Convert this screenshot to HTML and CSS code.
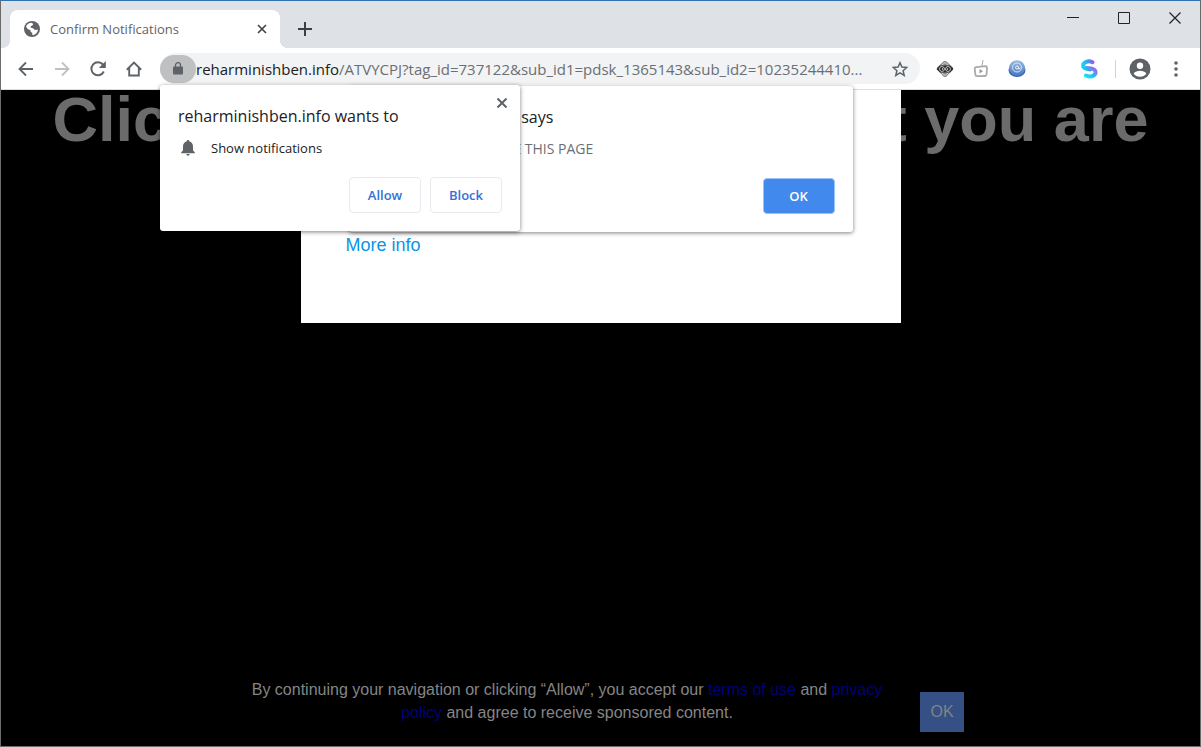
FILE: index.html
```html
<!DOCTYPE html>
<html lang="en">

<head>
    <meta charset="UTF-8">
    <meta name="viewport" content="width=device-width, initial-scale=1.0">
    <title>Confirm Notifications</title>
    <link rel="stylesheet" href="styles.css">
</head>

<body>
    <div class="window">
        <!-- Tab strip -->
        <header class="tabstrip">
            <div class="tab">
                <svg class="favicon" width="16" height="16" viewBox="0 0 16 16">
                    <circle cx="8" cy="8" r="8" fill="#5f6368"/>
                    <path d="M2 5.500C3 3.200 5 2 7.600 1.800L9.300 3 8.300 4.600 6.700 5.200 6.800 6.800 9.200 7.200 10.200 8.600 12 9 13.900 8.400C13.800 11.400 11.400 14 8.200 14L8.400 12 6.600 10.800 6.400 9 3.800 8.200Z" fill="#fff"/>
                    <path d="M1.800 8.200L5.600 9.600 6.200 11.400 7.400 12.400 7.200 14C4 13.600 1.800 11 1.800 8.200Z" fill="#5f6368"/>
                </svg>
                <span class="tab-title">Confirm Notifications</span>
                <button class="icon-button tab-close" aria-label="Close tab">
                    <svg width="10" height="10" viewBox="0 0 10 10"><path d="M1 1l8 8M9 1L1 9" stroke="#3c4043" stroke-width="1.600"/></svg>
                </button>
            </div>
            <button class="icon-button new-tab" aria-label="New tab">
                <svg width="14" height="14" viewBox="0 0 14 14"><path d="M7 0v14M0 7h14" stroke="#3c4043" stroke-width="2"/></svg>
            </button>
            <div class="window-controls">
                <button class="icon-button" aria-label="Minimize">
                    <svg width="12" height="12" viewBox="0 0 12 12"><path d="M0 5.500h12" stroke="#222"/></svg>
                </button>
                <button class="icon-button" aria-label="Maximize">
                    <svg width="12" height="12" viewBox="0 0 12 12"><path d="M.5.5h11v11H.5z" fill="none" stroke="#222"/></svg>
                </button>
                <button class="icon-button" aria-label="Close">
                    <svg width="12" height="12" viewBox="0 0 12 12"><path d="M.5.5l11 11M11.500.5l-11 11" stroke="#222" stroke-width="1.200"/></svg>
                </button>
            </div>
        </header>

        <!-- Toolbar -->
        <nav class="toolbar">
            <button class="icon-button" aria-label="Back">
                <svg width="16" height="16" viewBox="0 0 16 16"><path d="M15 8H2M8 1.500L1.500 8 8 14.500" fill="none" stroke="#5f6368" stroke-width="1.800"/></svg>
            </button>
            <button class="icon-button" aria-label="Forward">
                <svg width="16" height="16" viewBox="0 0 16 16"><path d="M1 8h13M8 1.500L14.500 8 8 14.500" fill="none" stroke="#bdc1c6" stroke-width="1.800"/></svg>
            </button>
            <button class="icon-button" aria-label="Reload">
                <svg width="16" height="16" viewBox="0 0 16 16"><path d="M13.800 10.500A6.500 6.500 0 1 1 13 3.700" fill="none" stroke="#5f6368" stroke-width="2"/><path d="M15.800 0v7H8.800z" fill="#5f6368"/></svg>
            </button>
            <button class="icon-button" aria-label="Home">
                <svg width="16" height="16" viewBox="0 0 16 16"><path d="M.8 8.700L8 1.600l7.200 7.100M3.200 7v7.500h9.600V7" fill="none" stroke="#5f6368" stroke-width="1.900"/></svg>
            </button>

            <div class="omnibox">
                <button class="icon-button site-info" aria-label="View site information">
                    <svg width="10" height="13" viewBox="0 0 10 13"><path d="M2.500 5V3.200a2.500 2.500 0 0 1 5 0V5" fill="none" stroke="#5f6368" stroke-width="1.300"/><rect y="4.500" width="10" height="8" rx="1" fill="#5f6368"/></svg>
                </button>
                <span class="url"><span class="host">reharminishben.info</span>/ATVYCPJ?tag_id=737122&amp;sub_id1=pdsk_1365143&amp;sub_id2=10235244410...</span>
                <button class="icon-button star" aria-label="Bookmark this page">
                    <svg width="16" height="16" viewBox="0 0 16 16"><path d="M8 1.700l1.900 4.400 4.800.4-3.600 3.200 1.100 4.700L8 11.900l-4.200 2.500 1.100-4.700L1.300 6.500l4.800-.4z" fill="none" stroke="#5f6368" stroke-width="1.500"/></svg>
                </button>

                <!-- Permission prompt -->
                <section class="bubble permission">
                    <button class="icon-button bubble-close" aria-label="Dismiss">
                        <svg width="10" height="10" viewBox="0 0 10 10"><path d="M.5.5l9 9M9.500.5l-9 9" stroke="#5f6368" stroke-width="2"/></svg>
                    </button>
                    <h2 class="bubble-title">reharminishben.info wants to</h2>
                    <div class="permission-row">
                        <svg width="14" height="16" viewBox="0 0 14 16"><path d="M7 0c.8 0 1.200.5 1.200 1.300C10.700 1.900 12 4 12 6.500v4l1.800 1.800v.9H.2v-.9L2 10.500v-4C2 4 3.300 1.900 5.800 1.300 5.800.5 6.200 0 7 0zM5.400 14h3.200c0 1-.7 1.700-1.600 1.700S5.400 15 5.400 14z" fill="#5f6368"/></svg>
                        <span>Show notifications</span>
                    </div>
                    <div class="bubble-actions">
                        <button class="button">Allow</button>
                        <button class="button">Block</button>
                    </div>
                </section>
            </div>

            <div class="extensions">
                <button class="icon-button" aria-label="Extension">
                    <svg width="18" height="18" viewBox="0 0 18 18">
                        <path d="M8 1h2l7 6.500v2L10 17H8L1 9.500v-2z" fill="#8c8c8c"/>
                        <path d="M5.500 5.500L9 2.500l3.500 3M5.500 12.500L9 15.500l3.500-3" fill="none" stroke="#d5d5d5"/>
                        <path d="M4 5.500h10L17.500 9 14 12.500H4L.5 9z" fill="#2b2b2b"/>
                        <circle cx="6" cy="9" r="2.400" fill="#111" stroke="#ccc"/>
                        <circle cx="12" cy="9" r="2.400" fill="#111" stroke="#ccc"/>
                        <circle cx="6.500" cy="9" r=".8" fill="#fff"/><circle cx="11.500" cy="9" r=".8" fill="#fff"/>
                    </svg>
                </button>
                <button class="icon-button" aria-label="Extension">
                    <svg width="16" height="18" viewBox="0 0 16 18"><path d="M10 0L9 6" stroke="#aaa"/><path d="M3 7.200l9.500-1q1.500 0 1.500 1.500l-.5 7q-.2 1.300-1.500 1.300L4 16.200q-1.500 0-1.600-1.300L1.700 8.600Q1.700 7.400 3 7.200z" fill="none" stroke="#aaa" stroke-width="1.800"/><path d="M6.500 9v4.500l3.500-2.300z" fill="#999"/></svg>
                </button>
                <button class="icon-button" aria-label="Extension">
                    <svg width="18" height="18" viewBox="0 0 18 18">
                        <defs><linearGradient id="disc" x1="0" y1="0" x2="0" y2="1"><stop offset="0" stop-color="#9dbbe4"/><stop offset="1" stop-color="#4577bf"/></linearGradient></defs>
                        <ellipse cx="9" cy="10" rx="8.500" ry="7" fill="#305fa8"/>
                        <circle cx="9" cy="8.200" r="8" fill="url(#disc)"/>
                        <circle cx="9" cy="7.500" r="4.500" fill="none" stroke="#dbe7f7"/>
                        <path d="M10.500 7.500a1.500 1.500 0 1 1-1.500-1.500q1.500 0 1.500 1.500v1.300q1.500.5 1.800-1.300" fill="none" stroke="#eef4fc"/>
                    </svg>
                </button>
                <span class="extension-space"></span>
                <button class="icon-button" aria-label="Extension">
                    <svg width="18" height="20" viewBox="0 0 18 20">
                        <defs>
                            <linearGradient id="ribbon-top" x1="0" y1="0" x2="1" y2="0"><stop offset="0" stop-color="#1fd0ee"/><stop offset=".5" stop-color="#2fa4ee"/><stop offset="1" stop-color="#9a5cf0"/></linearGradient>
                            <linearGradient id="ribbon-bottom" x1="0" y1="1" x2="1" y2="0"><stop offset="0" stop-color="#18e8e4"/><stop offset=".5" stop-color="#22b8ee"/><stop offset="1" stop-color="#b955f0"/></linearGradient>
                        </defs>
                        <path d="M12.500 3.200C10 2 7 2.200 5 3.500 2.500 5 2.500 8 5 9.200c1.500.8 3.500.8 5 1.200" fill="none" stroke="url(#ribbon-top)" stroke-width="4" stroke-linecap="round"/>
                        <path d="M7 9c3 .3 6.500 0 8 2.500 1.500 3-.5 5-3 5.700-2 .5-4 .3-6-.7" fill="none" stroke="url(#ribbon-bottom)" stroke-width="4" stroke-linecap="round"/>
                        <path d="M8 6.500c3-.3 6 0 8.500 1.500M1.500 12.500c3 1 6 1.300 9 .8" fill="none" stroke="#fff" stroke-width=".8"/>
                    </svg>
                </button>
            </div>
            <span class="separator"></span>
            <button class="icon-button" aria-label="Profile">
                <svg width="22" height="22" viewBox="0 0 22 22"><circle cx="11" cy="11" r="10.500" fill="#5f6368"/><circle cx="11" cy="7.700" r="3.200" fill="#fff"/><path d="M4.600 15.500C6 13.500 8.500 12.700 11 12.700s5 .8 6.400 2.800A7.800 7.800 0 0 1 11 18.700a7.800 7.800 0 0 1-6.400-3.200z" fill="#fff"/></svg>
            </button>
            <button class="icon-button" aria-label="Menu">
                <svg width="4" height="16" viewBox="0 0 4 16" fill="#5f6368"><circle cx="2" cy="2" r="1.800"/><circle cx="2" cy="8" r="1.800"/><circle cx="2" cy="14" r="1.800"/></svg>
            </button>
        </nav>

        <!-- Page content -->
        <main class="page">
            <h1 class="headline">Click "Allow" to confirm that you are</h1>

            <div class="card">
                <a class="more-info" href="#">More info</a>
            </div>

            <section class="bubble alert">
                <h2 class="bubble-title">reharminishben.info says</h2>
                <p class="alert-text">CLICK ALLOW TO CLOSE THIS PAGE</p>
                <div class="bubble-actions">
                    <button class="button primary">OK</button>
                </div>
            </section>

            <footer class="consent">
                <p class="consent-text">By continuing your navigation or clicking “Allow”, you accept our <a href="#">terms of use</a> and <a href="#">privacy policy</a> and agree to receive sponsored content.</p>
                <button class="consent-ok">OK</button>
            </footer>
        </main>
    </div>
</body>

</html>
```

FILE: styles.css
```css
* {
    box-sizing: border-box;
}

body {
    margin: 0;
    font-family: "Open Sans", "Noto Sans", sans-serif;
    color: #202124;
}

h1,
h2,
p {
    margin: 0;
    font-weight: normal;
}

button {
    font-family: inherit;
    cursor: pointer;
}

.window {
    display: flex;
    flex-direction: column;
    min-height: 100vh;
    border: 1px solid #6b6b6b;
    border-top-color: #2f74b0;
}

.icon-button {
    display: flex;
    align-items: center;
    justify-content: center;
    flex: none;
    width: 36px;
    height: 28px;
    padding: 0;
    border: none;
    background: none;
}

/* Tab strip */
.tabstrip {
    display: flex;
    align-items: flex-end;
    height: 47px;
    padding-left: 9px;
    background-color: #dee1e6;
}

.tab {
    position: relative;
    display: flex;
    align-items: center;
    width: 270px;
    height: 38px;
    padding: 0 4px 0 14px;
    border-radius: 8px 8px 0 0;
    background-color: #fff;
}

.tab::before,
.tab::after {
    content: "";
    position: absolute;
    bottom: 0;
    width: 8px;
    height: 8px;
}

.tab::before {
    right: 100%;
    background: radial-gradient(circle at 0 0, transparent 8px, #fff 8px);
}

.tab::after {
    left: 100%;
    background: radial-gradient(circle at 100% 0, transparent 8px, #fff 8px);
}

.tab-title {
    flex: 1;
    margin-left: 10px;
    font-size: 13px;
    color: #5f6368;
}

.tab-close {
    width: 28px;
}

.new-tab {
    height: 38px;
    margin-left: 7px;
}

.window-controls {
    display: flex;
    align-self: flex-start;
    margin-left: auto;
}

.window-controls .icon-button {
    width: 51px;
    height: 34px;
}

/* Toolbar */
.toolbar {
    display: flex;
    align-items: center;
    height: 42px;
    padding: 0 6px 0 7px;
    border-bottom: 1px solid #dcdcdc;
    background-color: #fff;
}

.omnibox {
    position: relative;
    display: flex;
    align-items: center;
    flex: 1;
    min-width: 0;
    height: 31px;
    margin: 0 7px 0 8px;
    padding-right: 2px;
    border-radius: 16px;
    background-color: #f1f3f4;
}

.site-info {
    border-radius: 14px;
    background-color: #bfc0c1;
}

.url {
    flex: 1;
    overflow: hidden;
    white-space: nowrap;
    font-size: 15px;
    color: #6b6f74;
}

.host {
    color: #202124;
}

.extensions {
    display: flex;
}

.extension-space {
    width: 36px;
}

.separator {
    width: 1px;
    height: 18px;
    margin: 0 6px 0 8px;
    background-color: #d0d2d5;
}

/* Browser bubbles */
.bubble {
    position: absolute;
    padding: 18px;
    border-radius: 3px;
    background-color: #fff;
    box-shadow: 0 1px 4px rgba(0, 0, 0, 0.5);
}

.bubble-title {
    font-size: 16px;
    line-height: 26px;
}

.bubble-actions {
    display: flex;
    justify-content: flex-end;
    gap: 9px;
    margin-top: 15px;
}

.button {
    width: 72px;
    height: 36px;
    border: 1px solid #e8eaed;
    border-radius: 4px;
    background-color: #fff;
    font-size: 13px;
    font-weight: 600;
    color: #3470d8;
}

.primary {
    border-color: #9cc3f8;
    background-color: #4189ec;
    color: #fff;
}

.permission {
    z-index: 2;
    top: 32px;
    left: 0;
    width: 360px;
}

.bubble-close {
    position: absolute;
    top: 4px;
    right: 0;
}

.permission-row {
    display: flex;
    align-items: center;
    gap: 16px;
    padding: 10px 3px 5px;
    font-size: 13px;
    line-height: 18px;
}

.alert {
    z-index: 1;
    top: -4px;
    left: 50%;
    width: 504px;
    padding-left: 16px;
    transform: translateX(-50%);
}

.alert-text {
    padding: 9px 0 4px;
    font-size: 14px;
    line-height: 20px;
    color: #6b6f74;
}

/* Page content */
.page {
    position: relative;
    display: flex;
    flex: 1;
    flex-direction: column;
    background-color: #000;
    font-family: "Liberation Sans", Arial, sans-serif;
    font-size: 16px;
}

.page .bubble {
    font-family: "Open Sans", "Noto Sans", sans-serif;
}

.headline {
    font-size: 63px;
    font-weight: bold;
    line-height: 58px;
    text-align: center;
    white-space: nowrap;
    color: #6b6b6b;
}

.card {
    position: absolute;
    top: 0;
    left: 50%;
    width: 600px;
    padding: 145px 45px 67px;
    background-color: #fff;
    transform: translateX(-50%);
}

.more-info {
    font-size: 18px;
    line-height: 21px;
    text-decoration: none;
    color: #0b95e5;
}

.consent {
    display: flex;
    align-items: flex-end;
    justify-content: center;
    gap: 23px;
    margin-top: auto;
    padding-bottom: 14px;
}

.consent-text {
    max-width: 660px;
    padding-bottom: 8px;
    line-height: 23px;
    text-align: center;
    color: #858585;
}

.consent-text a {
    text-decoration: none;
    color: #00007c;
}

.consent-ok {
    width: 44px;
    height: 40px;
    padding: 0;
    border: none;
    background-color: #345085;
    font-size: 16px;
    color: #808388;
}
```
